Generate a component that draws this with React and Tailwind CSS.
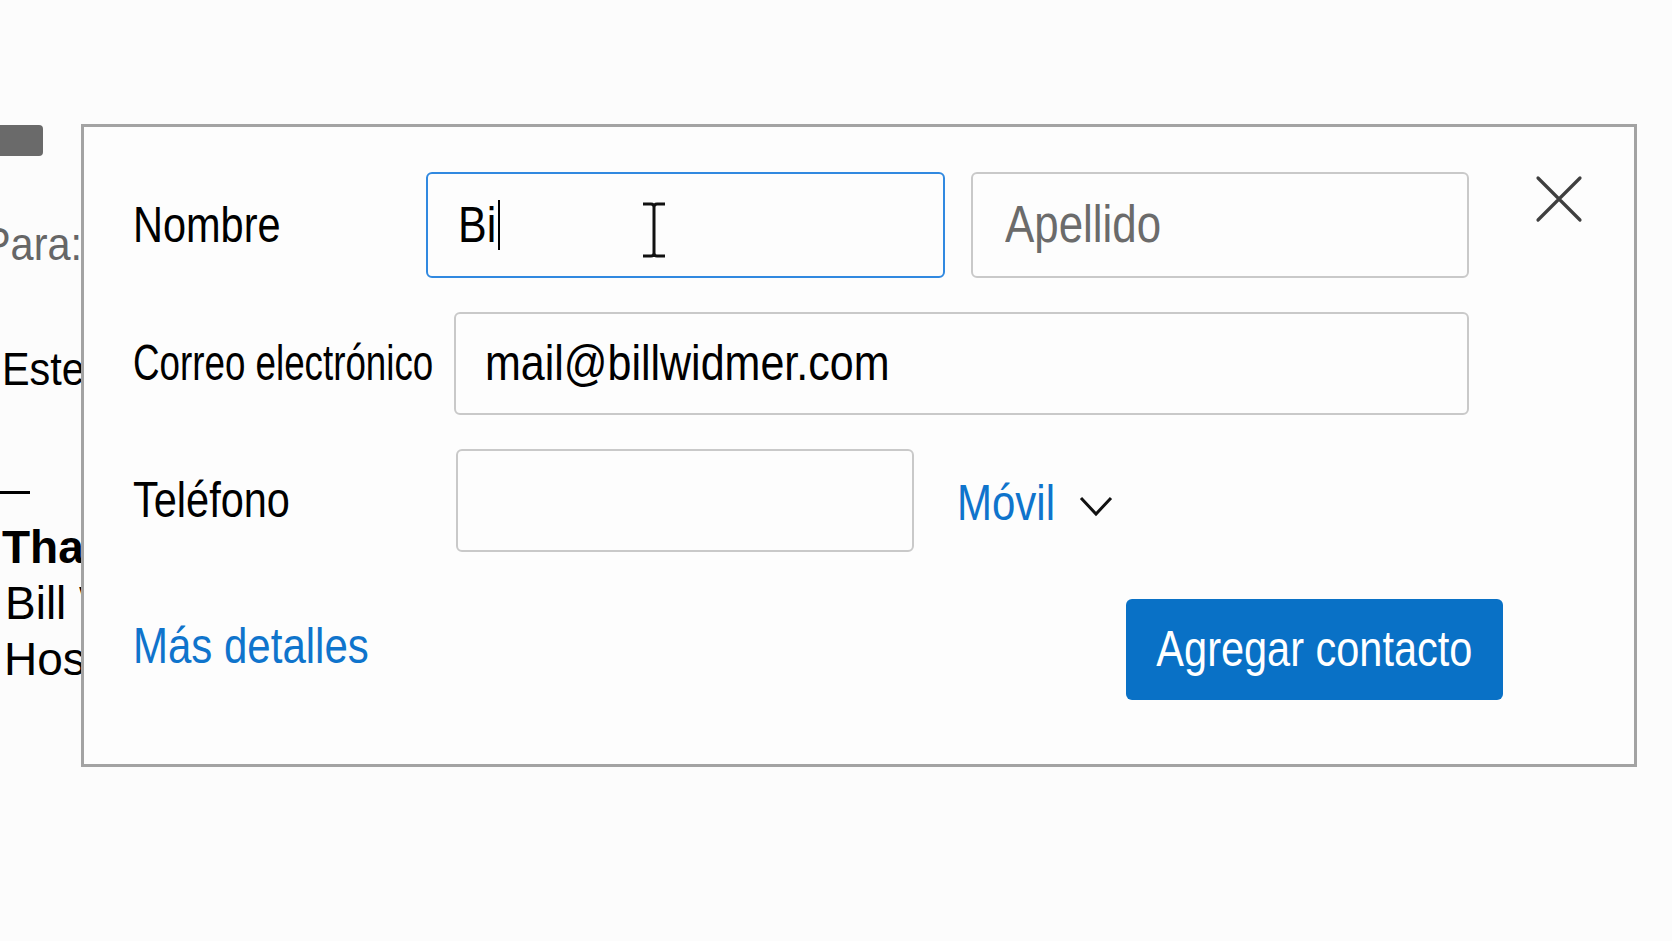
const font = "font-['Liberation_Sans',Arial,sans-serif]";

// text-edit cursor hovering over the first-name field
const IBeam = () => (
  <svg width="28" height="56" viewBox="0 0 28 56" className="absolute left-[212px] top-[28px]">
    <path d="M3 2h8q3 0 3 3v46q0 3-3 3H3M25 2h-8q-3 0-3 3v46q0 3 3 3h8" fill="none" stroke="#111" strokeWidth="3" />
  </svg>
);

const CloseIcon = () => (
  <svg width="48" height="48" viewBox="0 0 48 48" className="ml-[66px] self-start mt-[3px]">
    <path d="M3 3L45 45M45 3L3 45" stroke="#3f3f3f" strokeWidth="3.2" strokeLinecap="round" />
  </svg>
);

const Chevron = () => (
  <svg width="34" height="22" viewBox="0 0 34 22" className="ml-[5px] mt-[4px]">
    <path d="M2 3L17 19L32 3" fill="none" stroke="#111" strokeWidth="3" />
  </svg>
);

// the dialog text is set tighter than the plain face
const Narrow = ({ className = "origin-left scale-x-[0.83]", children }) => (
  <span className={`inline-block whitespace-nowrap ${className}`}>{children}</span>
);

const App = () => {
  return (
    <div className={`relative w-[1672px] h-[941px] overflow-hidden bg-[#fcfcfc] ${font}`}>
      {/* message behind the dialog */}
      <div className="flex flex-col pt-[125px] text-[46px] leading-none text-black">
        <div className="w-[43px] h-[31px] bg-[#6a6a6a] rounded-r-[4px]" />
        <div className="mt-[65px] -ml-[17px] text-[#666]">
          <Narrow className="origin-left scale-x-[0.9]">Para:</Narrow>
        </div>
        <div className="mt-[79px] ml-[2px]">
          <Narrow className="origin-left scale-x-[0.9]">Este</Narrow>
        </div>
        <div className="mt-[99px] w-[30px] h-[3px] bg-black" />
        <div className="mt-[30px] ml-[2px] font-bold">Thanks</div>
        <div className="mt-[10px] ml-[5px]">Bill W</div>
        <div className="mt-[10px] ml-[4px]">Host</div>
      </div>

      <div className="absolute left-[81px] top-[124px] w-[1556px] h-[643px] border-[3px] border-[#a3a3a3] bg-[#fdfdfd] pl-[49px] pt-[45px] flex flex-col">
        <div className="flex items-center h-[106px]">
          <div className="w-[293px] text-[50px] text-black">
            <Narrow>Nombre</Narrow>
          </div>
          <div className="relative w-[519px] h-[106px] border-[2.5px] border-[#3189e0] rounded-[6px] flex items-center pl-[30px] text-[50px] text-black">
            <Narrow className="origin-left scale-x-[0.86]">Bi</Narrow>
            <span className="-ml-[4px] w-[2px] h-[50px] bg-black" />
            <IBeam />
          </div>
          <div className="ml-[26px] w-[498px] h-[106px] border-2 border-[#c9c9c9] rounded-[6px] flex items-center pl-[32px] text-[51px] text-[#6b6b6b]">
            <Narrow className="origin-left scale-x-[0.86]">Apellido</Narrow>
          </div>
          <CloseIcon />
        </div>

        <div className="flex items-center mt-[34px] h-[103px]">
          <div className="w-[321px] text-[50px] text-black">
            <Narrow className="origin-left scale-x-[0.735]">Correo electrónico</Narrow>
          </div>
          <div className="w-[1015px] h-[103px] border-2 border-[#c9c9c9] rounded-[6px] flex items-center pl-[29px] text-[50px] text-black">
            <Narrow className="origin-left scale-x-[0.86]">mail@billwidmer.com</Narrow>
          </div>
        </div>

        <div className="flex items-center mt-[34px] h-[103px]">
          <div className="w-[323px] text-[50px] text-black">
            <Narrow>Teléfono</Narrow>
          </div>
          <div className="w-[458px] h-[103px] border-2 border-[#c9c9c9] rounded-[6px]" />
          <div className="ml-[43px] mt-[6px] flex items-center text-[50px] text-[#0f74cc]">
            <Narrow className="origin-left scale-x-[0.84]">Móvil</Narrow>
            <Chevron />
          </div>
        </div>

        <div className="flex items-center justify-between mt-[47px] pr-[131px]">
          <a className="-mt-[8px] text-[50px] text-[#0f74cc] leading-none">
            <Narrow className="origin-left scale-x-[0.84]">Más detalles</Narrow>
          </a>
          <button className="w-[377px] h-[101px] bg-[#0971c6] rounded-[6px] text-white text-[50px] flex items-center justify-center">
            <Narrow className="origin-center scale-x-[0.83]">Agregar contacto</Narrow>
          </button>
        </div>
      </div>
    </div>
  );
};

export default App;
